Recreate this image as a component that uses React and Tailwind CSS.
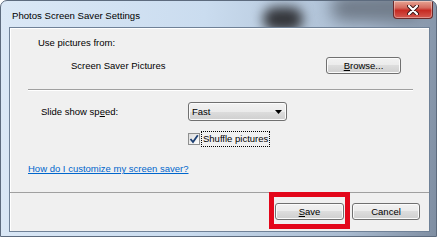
import React from "react";

const face =
  "h-[17px] rounded-[3px] border border-[#707070] bg-[linear-gradient(#f2f2f2_0%,#ebebeb_50%,#dddddd_50%,#cfcfcf_100%)] shadow-[inset_0_0_0_1px_#fbfbfb]";
const btn = "flex items-center justify-center " + face;

const App = () => {
  return (
    <div className="w-[439px] h-[240px] bg-white font-['Liberation_Sans',Arial,sans-serif] text-[9.5px] text-black leading-[12px]">
      {/* window frame */}
      <div className="relative w-[437px] h-[237px] rounded-t-[7px] border border-[#5d6b7e] flex flex-col overflow-hidden bg-[linear-gradient(95deg,#dbe8f6_0%,#cadcef_45%,#a9bbd0_80%,#7f8ea2_100%)]">
        {/* glass reflections behind the title bar */}
        <div className="absolute left-[330px] -top-[6px] w-[90px] h-[26px] rounded-full bg-[#6f7a88] blur-[8px]" />
        <div className="absolute left-[262px] top-[6px] w-[40px] h-[24px] rounded-full bg-[#34363b] blur-[6px]" />

        {/* title bar */}
        <div className="relative flex h-[26px] shrink-0">
          <span className="ml-[11px] mt-[9px] text-[9.6px]">Photos Screen Saver Settings</span>
          <button className="ml-auto mr-[3px] w-[40px] h-[18px] rounded-b-[4px] border border-t-0 border-[#6b2a2a] flex items-center justify-center bg-[linear-gradient(#e7a493_0%,#d46a5e_40%,#c62a22_55%,#d45a50_100%)] shadow-[inset_0_0_0_1px_rgba(255,255,255,0.35)]">
            <svg width="12" height="10" viewBox="0 0 12 10">
              <path d="M2 1 L10 9 M10 1 L2 9" stroke="#3a1414" strokeWidth="4" strokeLinecap="round" />
              <path d="M2 1 L10 9 M10 1 L2 9" stroke="#ffffff" strokeWidth="2.2" strokeLinecap="round" />
            </svg>
          </button>
        </div>

        {/* client area */}
        <div className="relative flex-1 ml-[8px] mr-[6px] mb-[4px] border border-[#6f8197] bg-[#f0f0f0] shadow-[inset_1px_1px_0_#ffffff] flex flex-col">
          <div className="flex-1 flex flex-col">
            <div className="mt-[9px] pl-[28px]">Use pictures from:</div>

            <div className="mt-[8px] flex items-center justify-between pl-[61px] pr-[28px]">
              <span>Screen Saver Pictures</span>
              <button className={btn + " w-[75px]"}>
                <span>
                  <u>B</u>rowse...
                </span>
              </button>
            </div>

            <div className="mt-[15px] ml-[18px] mr-[16px] h-px bg-[#a0a0a0] shadow-[0_1px_0_#ffffff]" />

            <div className="mt-[12px] flex items-center pl-[31px]">
              <span className="w-[147px]">
                Slide show sp<u>e</u>ed:
              </span>
              <div className={face + " flex items-center justify-between w-[99px] h-[19px] px-[3px] rounded-[2px]"}>
                <span>Fast</span>
                <svg width="7" height="4" viewBox="0 0 7 4" className="mr-[1px]">
                  <path d="M0 0 H7 L3.5 4 Z" fill="#000" />
                </svg>
              </div>
            </div>

            <div className="mt-[10px] flex items-center pl-[178px]">
              <div className="w-[12px] h-[12px] border border-[#8e8f8f] bg-[linear-gradient(135deg,#dcdcdc,#ffffff)] flex items-center justify-center">
                <svg width="10" height="10" viewBox="0 0 10 10">
                  <path d="M1.5 5 L4 8 L8.8 1.2" stroke="#1c3f73" strokeWidth="1.8" fill="none" />
                </svg>
              </div>
              <span className="ml-[1px] px-[1px] py-[1px] border border-dotted border-[#000]">Shuffle pictures</span>
            </div>

            <div className="mt-[16px] pl-[18px]">
              <span className="text-[#0066cc] underline">How do I customize my screen saver?</span>
            </div>
          </div>

          {/* footer */}
          <div className="border-t border-[#a0a0a0] pt-[10px] pb-[11px] pr-[9px] flex justify-end gap-[8px]">
            <div className="relative">
              <button className={btn + " w-[69px] border-[#3c7fb1] bg-[linear-gradient(#eaf6fd_0%,#d9f0fc_50%,#bee6fd_50%,#a7d9f5_100%)] shadow-[inset_0_0_0_1px_#e4f4fd]"}>
                <span>
                  <u>S</u>ave
                </span>
              </button>
              <div className="absolute -left-[6px] -right-[6px] -top-[11px] -bottom-[9px] border-[5px] border-[#e3061a]" />
            </div>
            <button className={btn + " w-[68px]"}>Cancel</button>
          </div>
        </div>
      </div>
    </div>
  );
};

export default App;
